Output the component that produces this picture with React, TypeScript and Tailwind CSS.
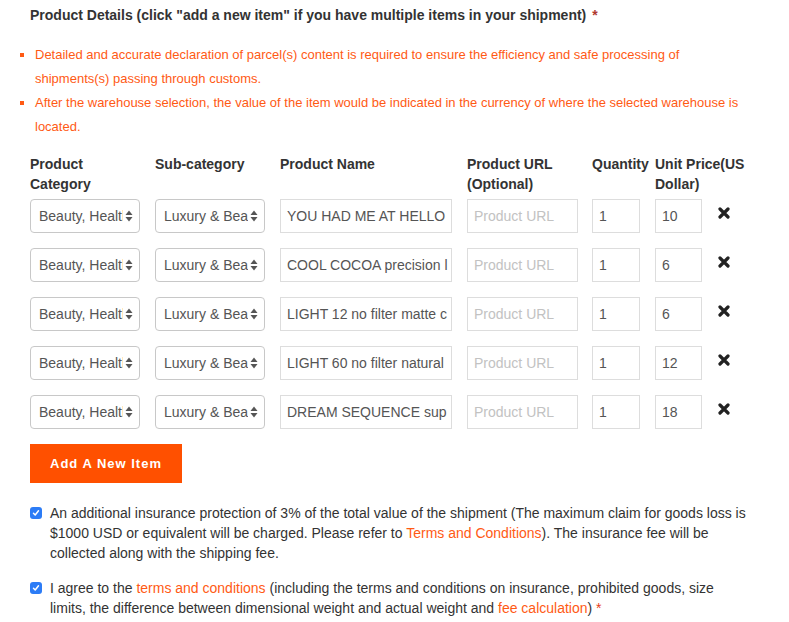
const rows = [
  { name: "YOU HAD ME AT HELLO", price: "10" },
  { name: "COOL COCOA precision l", price: "6" },
  { name: "LIGHT 12 no filter matte c", price: "6" },
  { name: "LIGHT 60 no filter natural", price: "12" },
  { name: "DREAM SEQUENCE sup", price: "18" },
];

const grid = "grid grid-cols-[125px_125px_187px_125px_63px_63px_auto]";

function FakeSelect({ text }: { text: string }) {
  return (
    <div className="flex h-[34px] w-[110px] items-center rounded-[4px] border border-[#c8c8c8] bg-white pl-[8px] pr-[6px]">
      <span className="flex-1 overflow-hidden whitespace-nowrap text-[14px] text-[#555]">{text}</span>
      <svg width="8" height="12" viewBox="0 0 8 12" className="ml-[2px] shrink-0">
        <path d="M4 0.5 L7.5 5 L0.5 5 Z" fill="#555" />
        <path d="M4 11.5 L7.5 7 L0.5 7 Z" fill="#555" />
      </svg>
    </div>
  );
}

function Field({ value, width, placeholder }: { value?: string; width: string; placeholder?: string }) {
  return (
    <div className={`flex h-[34px] items-center overflow-hidden border border-[#ddd] bg-white pl-[6px] ${width}`}>
      {value ? (
        <span className="whitespace-nowrap text-[14px] text-[#555]">{value}</span>
      ) : (
        <span className="whitespace-nowrap text-[14px] text-[#c2c2c2]">{placeholder}</span>
      )}
    </div>
  );
}

function CheckBox() {
  return (
    <span className="mt-[4px] flex h-[12px] w-[12px] shrink-0 items-center justify-center rounded-[3px] bg-[#2c7cf6]">
      <svg width="8" height="8" viewBox="0 0 8 8">
        <path d="M1.5 4.3 L3.2 6 L6.5 1.8" stroke="white" strokeWidth="1.5" fill="none" strokeLinecap="round" strokeLinejoin="round" />
      </svg>
    </span>
  );
}

export default function App() {
  return (
    <div className="min-h-[622px] w-[789px] bg-white pt-[5px] font-['Liberation_Sans',Arial,sans-serif] text-[#333]">
      <p className="pl-[30px] text-[14px] font-bold leading-[20px]">
        Product Details (click "add a new item" if you have multiple items in your shipment){" "}
        <span className="ml-[2px] text-[#b03a2e]">*</span>
      </p>

      <ul className="mt-[18px] pl-[20px] pr-[10px] text-[13px] leading-[24px] text-[#ff5a14]">
        <li className="flex">
          <span className="mr-[11px] mt-[10px] h-[4px] w-[4px] shrink-0 bg-[#ff5a14]" />
          <span>
            Detailed and accurate declaration of parcel(s) content is required to ensure the efficiency and safe processing of
            <br />
            shipments(s) passing through customs.
          </span>
        </li>
        <li className="flex">
          <span className="mr-[11px] mt-[10px] h-[4px] w-[4px] shrink-0 bg-[#ff5a14]" />
          <span>
            After the warehouse selection, the value of the item would be indicated in the currency of where the selected warehouse is located.
          </span>
        </li>
      </ul>

      <div className="mt-[15px] pl-[30px]">
        <div className={`${grid} text-[14px] font-bold leading-[20px] text-[#333]`}>
          <div className="w-[100px]">Product Category</div>
          <div>Sub-category</div>
          <div>Product Name</div>
          <div className="w-[100px]">Product URL (Optional)</div>
          <div>Quantity</div>
          <div className="w-[100px]">Unit Price(US Dollar)</div>
          <div />
        </div>

        <div className="mt-[5px] flex flex-col gap-[15px]">
          {rows.map((r, i) => (
            <div key={i} className={`${grid} items-center`}>
              <FakeSelect text="Beauty, Health & Personal Care" />
              <FakeSelect text="Luxury & Beauty" />
              <Field value={r.name} width="w-[172px]" />
              <Field placeholder="Product URL" width="w-[111px]" />
              <Field value="1" width="w-[48px]" />
              <Field value={r.price} width="w-[47px]" />
              <svg width="12" height="12" viewBox="0 0 12 12" className="-mt-[6px]">
                <path d="M2 2 L10 10 M10 2 L2 10" stroke="#222" strokeWidth="3.2" strokeLinecap="round" />
              </svg>
            </div>
          ))}
        </div>

        <button
          type="button"
          className="mt-[15px] h-[39px] w-[152px] bg-[#ff5000] text-[13px] font-bold tracking-[1px] text-white"
        >
          Add A New Item
        </button>
      </div>

      <div className="mt-[20px] flex gap-[8px] pl-[30px] pr-[36px] text-[14px] leading-[20px] text-[#333]">
        <CheckBox />
        <p>
          An additional insurance protection of 3% of the total value of the shipment (The maximum claim for goods loss is $1000 USD or equivalent will be charged. Please refer to{" "}
          <span className="text-[#ff5a14]">Terms and Conditions</span>). The insurance fee will be collected along with the shipping fee.
        </p>
      </div>

      <div className="mt-[15px] flex gap-[8px] pl-[30px] pr-[36px] text-[14px] leading-[20px] text-[#333]">
        <CheckBox />
        <p>
          I agree to the <span className="text-[#ff5a14]">terms and conditions</span> (including the terms and conditions on insurance, prohibited goods, size limits, the difference between dimensional weight and actual weight and{" "}
          <span className="text-[#ff5a14]">fee calculation</span>) <span className="text-[#e8401a]">*</span>
        </p>
      </div>
    </div>
  );
}
